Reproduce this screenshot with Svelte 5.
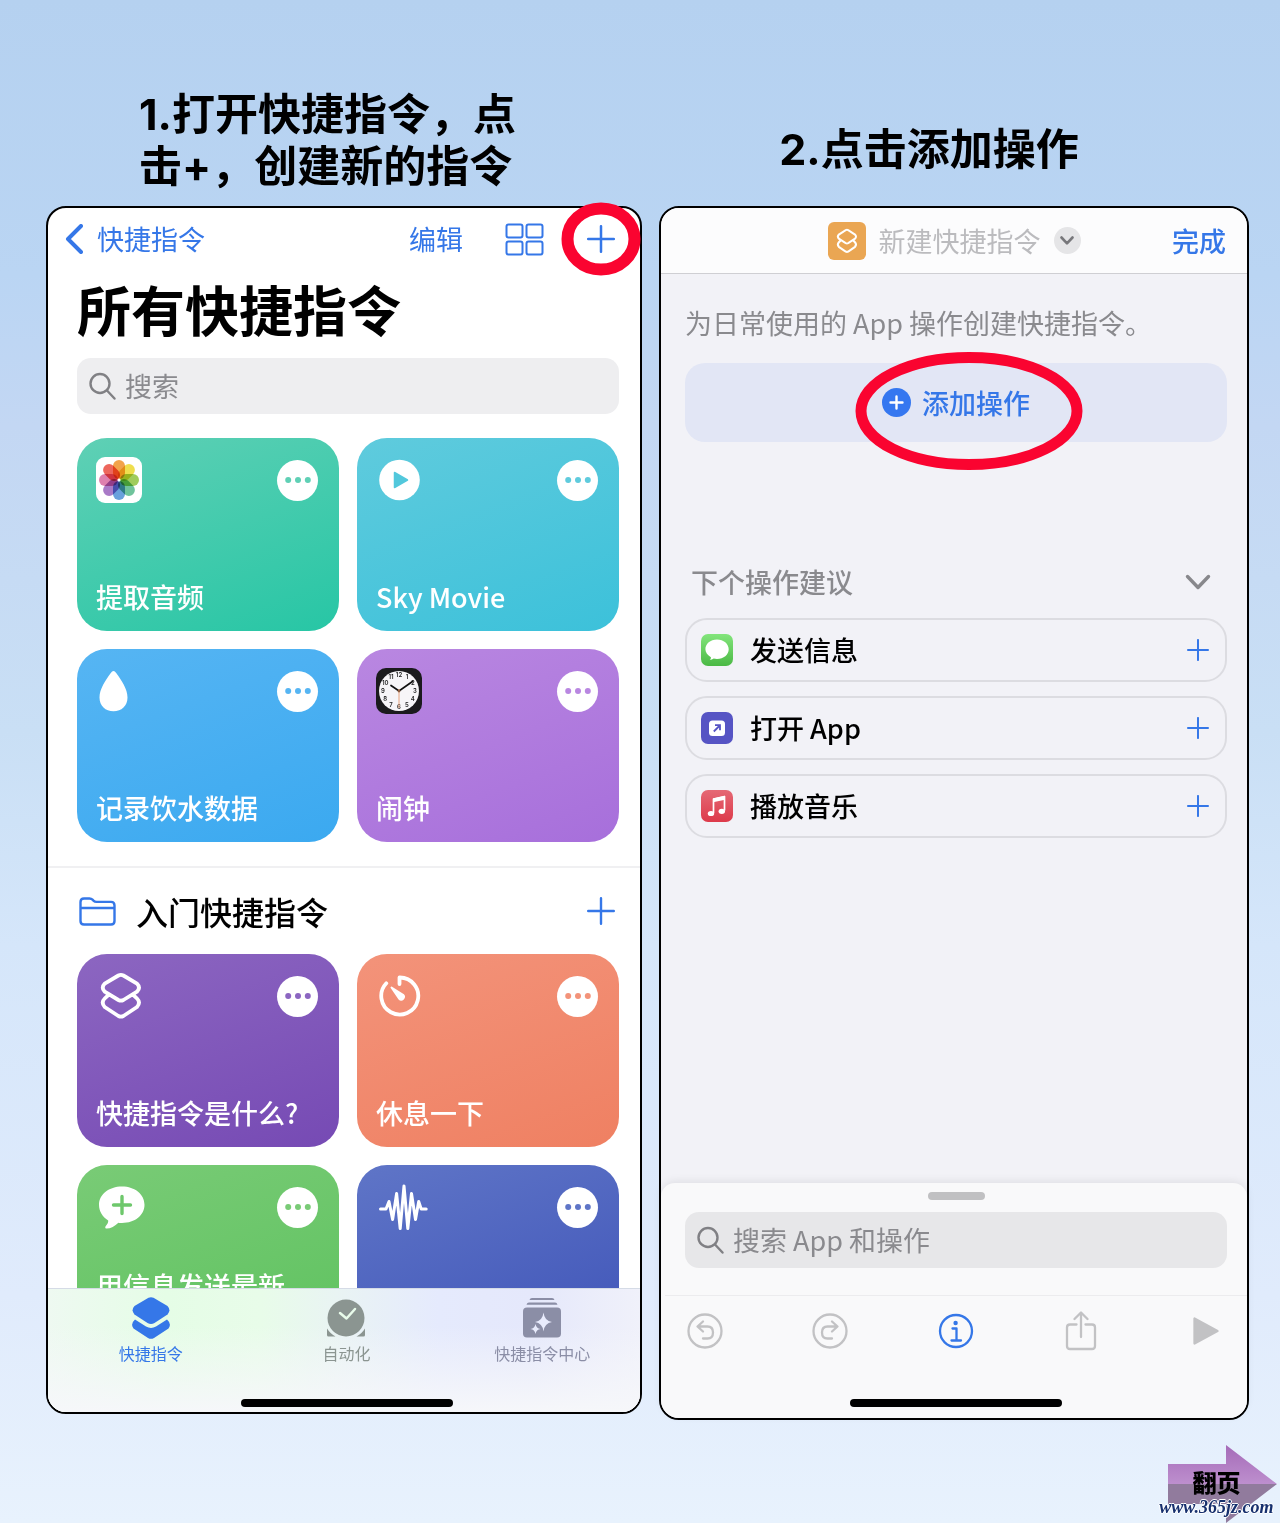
<script>
  const myShortcuts = [
    { title: '提取音频', icon: 'photos', from: '#5fd0b5', to: '#27c6a5' },
    { title: 'Sky Movie', icon: 'play', from: '#5fcbdd', to: '#3cc1da' },
    { title: '记录饮水数据', icon: 'drop', from: '#56b5f3', to: '#3ba9f0' },
    { title: '闹钟', icon: 'clock', from: '#b987e1', to: '#a76fdb' },
  ]

  const starterShortcuts = [
    { title: '快捷指令是什么?', icon: 'layers', from: '#8c66c1', to: '#764ab4' },
    { title: '休息一下', icon: 'timer', from: '#f3937a', to: '#ef8062' },
    { title: '用信息发送最新', icon: 'bubble', from: '#79cb76', to: '#5ec25f' },
    { title: '', icon: 'wave', from: '#5f75c7', to: '#3f54b8' },
  ]

  const suggestions = [
    { title: '发送信息', icon: 'messages' },
    { title: '打开 App', icon: 'openapp' },
    { title: '播放音乐', icon: 'music' },
  ]

  const petals = ['#f0932b', '#ecd92f', '#8fc33f', '#56b98a', '#4f8fd6', '#9a63bd', '#d86aa0', '#ea4b3f']
  const hours = [1, 2, 3, 4, 5, 6, 7, 8, 9, 10, 11, 12]

  // The two stacked diamonds of the app's logo, in a 46px box
  const layersPath =
    'M22.4 2.500q2.500-1.300 5 0L41 10.700q4 4 0 8L27.400 27q-2.500 1.300-5 0L8.700 18.700q-4-4 0-8z' +
    'M11.500 22.800l-2.800 2.700q-4 4 0 8.500L22.400 43q2.500 1.300 5 0L41 34q4-4.500 0-8.500l-2.800-2.700'

  let query = $state('')
  let actionQuery = $state('')

  function hourX(h) {
    return 23 + Math.sin((h * Math.PI) / 6) * 16
  }

  function hourY(h) {
    return 25 - Math.cos((h * Math.PI) / 6) * 16
  }
</script>

{#snippet plus(size)}
  <svg class="plus" width={size} height={size} viewBox="0 0 28 28" aria-hidden="true">
    <path d="M14 1.2v25.6M1.2 14h25.6" />
  </svg>
{/snippet}

{#snippet magnifier()}
  <svg class="search__icon" width="28" height="28" viewBox="0 0 28 28" aria-hidden="true">
    <circle cx="11" cy="11.500" r="9.500" />
    <path d="M18 18.500l7.500 8" />
  </svg>
{/snippet}

{#snippet cardIcon(name)}
  {#if name === 'photos'}
    <svg width="46" height="46" viewBox="0 0 46 46" aria-hidden="true">
      <rect width="46" height="46" rx="9" fill="#fff" />
      {#each petals as color, i}
        <rect class="petal" x="17" y="3" width="12" height="19" rx="6" fill={color} transform="rotate({i * 45} 23 23)" />
      {/each}
      <circle cx="23" cy="23" r="1.500" fill="#fff" />
    </svg>
  {:else if name === 'play'}
    <svg width="46" height="46" viewBox="0 0 46 46" aria-hidden="true">
      <circle cx="23.500" cy="23" r="20.300" fill="#fff" />
      <path d="M18.500 15.500v15l13-7.500z" fill="#52c8dc" stroke="#52c8dc" stroke-width="1.500" stroke-linejoin="round" />
    </svg>
  {:else if name === 'drop'}
    <svg width="46" height="46" viewBox="0 0 46 46" aria-hidden="true">
      <path d="M17.500 3c-1 0-1.800.7-2.700 2.100C9.500 12.500 3.500 21 3.500 29.500c0 8.500 6 13.800 14 13.800s14-5.300 14-13.800c0-8.500-6-17-11.300-24.400C19.300 3.700 18.500 3 17.500 3z" fill="#fff" />
    </svg>
  {:else if name === 'clock'}
    <svg width="46" height="46" viewBox="0 0 46 46" aria-hidden="true">
      <rect width="46" height="46" rx="10" fill="#1b1a1d" />
      <circle cx="23" cy="23" r="20" fill="#f7f5f8" />
      {#each hours as h}
        <text class="hour" x={hourX(h)} y={hourY(h)}>{h}</text>
      {/each}
      <path d="M15 17.500l8 5.500 13.500-9.500" fill="none" stroke="#111" stroke-width="1.700" stroke-linecap="round" />
      <path d="M23 21v19" stroke="#e8a27c" />
      <circle cx="23" cy="23" r="1.400" fill="#8b5a3c" />
    </svg>
  {:else if name === 'layers'}
    <svg class="line" width="46" height="46" viewBox="0 0 46 46" aria-hidden="true">
      <path d={layersPath} />
    </svg>
  {:else if name === 'timer'}
    <svg class="line" width="46" height="46" viewBox="0 0 46 46" aria-hidden="true">
      <path d="M23.500 11V4.500A18.500 18.500 0 1 1 10.300 10.300" />
      <path d="M15.500 14.500l11.500 7.300a2.700 2.700 0 0 1-3.800 4z" fill="#fff" stroke-width="2" />
    </svg>
  {:else if name === 'bubble'}
    <svg width="46" height="46" viewBox="0 0 46 46" aria-hidden="true">
      <path d="M26 2.500c13 0 22.500 8 22.500 18.300S39 39 26 39c-1.500 0-2.500 0-3.600-.3-3.400 3.300-7.900 5.800-11.600 5.900-1.600 0-2.100-1.600-1-2.700 1.700-1.900 2.600-3.400 2.400-5.400C6.600 33 3 27.500 3 20.800 3 10.500 13 2.500 26 2.500z" fill="#fff" />
      <path d="M26 12.500v17M17.500 21h17" stroke="#6ec86c" stroke-width="3.400" stroke-linecap="round" />
    </svg>
  {:else}
    <svg class="line" width="46" height="46" viewBox="0 0 46 46" aria-hidden="true">
      <path d="M4.500 25h5.500l3-7.500 3.600 18 4-26 3.600 35L28 2l3.800 42.500 3.700-35 4 26 3.200-18 2.500 7.500h5" stroke-width="3" />
    </svg>
  {/if}
{/snippet}

{#snippet card(item)}
  <article class="card card--{item.icon}" style:background="linear-gradient(160deg, {item.from}, {item.to})">
    <div class="card__top">
      <span class="card__icon">{@render cardIcon(item.icon)}</span>
      <button class="card__more" type="button" aria-label="更多" style:color={item.from}>
        <svg width="26" height="6" viewBox="0 0 26 6" fill="currentColor" aria-hidden="true">
          <circle cx="3.200" cy="3" r="3" />
          <circle cx="13" cy="3" r="3" />
          <circle cx="22.800" cy="3" r="3" />
        </svg>
      </button>
    </div>
    <h4 class="card__title">{item.title}</h4>
  </article>
{/snippet}

{#snippet suggestionIcon(name)}
  {#if name === 'messages'}
    <svg width="32" height="32" viewBox="0 0 32 32" aria-hidden="true">
      <defs>
        <linearGradient id="messages-fill" x2="0" y2="1">
          <stop stop-color="#83e57c" />
          <stop offset="1" stop-color="#4bb945" />
        </linearGradient>
      </defs>
      <rect width="32" height="32" rx="7" fill="url(#messages-fill)" />
      <path d="M16 5.500c6.600 0 11.700 4.300 11.700 9.800S22.600 25 16 25c-1.200 0-2.300-.1-3.300-.4-1.200.9-2.600 1.400-4 1.400 1-.8 1.300-1.800 1.200-2.800-3.300-1.800-5.500-4.700-5.500-7.900C4.400 9.800 9.400 5.500 16 5.500z" fill="#fff" />
    </svg>
  {:else if name === 'openapp'}
    <svg width="32" height="32" viewBox="0 0 32 32" aria-hidden="true">
      <rect width="32" height="32" rx="7" fill="#5654c4" />
      <rect x="8" y="8.500" width="16" height="15.500" rx="3.500" fill="#fff" />
      <path d="M12.800 19.500l6-6M14 13.200h5v5" fill="none" stroke="#5654c4" stroke-width="1.800" />
    </svg>
  {:else}
    <svg width="32" height="32" viewBox="0 0 32 32" aria-hidden="true">
      <defs>
        <linearGradient id="music-fill" x2="0" y2="1">
          <stop stop-color="#e56975" />
          <stop offset="1" stop-color="#dd3a4a" />
        </linearGradient>
      </defs>
      <rect width="32" height="32" rx="7" fill="url(#music-fill)" />
      <path d="M12.500 23V9l11-2.500v14" fill="none" stroke="#fff" stroke-width="1.700" stroke-linejoin="round" />
      <path d="M12 8.500l12-2.700v4L12 12.300z" fill="#fff" />
      <ellipse cx="10" cy="23.500" rx="3.200" ry="2.600" fill="#fff" />
      <ellipse cx="20.800" cy="21.300" rx="3.200" ry="2.600" fill="#fff" />
    </svg>
  {/if}
{/snippet}

<main class="guide" lang="zh-CN">
  <div class="steps">
    <section class="step">
      <h2 class="step__title">1.打开快捷指令，点<br />击+，创建新的指令</h2>

      <div class="phone">
        <nav class="nav">
          <a class="nav__back" href="#folders">
            <svg width="18" height="30" viewBox="0 0 18 30" aria-hidden="true">
              <path d="M16 2L3 15l13 13" />
            </svg>
            快捷指令
          </a>
          <button class="nav__edit" type="button">编辑</button>
          <button class="nav__grid" type="button" aria-label="网格视图">
            <svg width="40" height="33" viewBox="0 0 40 33" aria-hidden="true">
              <rect x="1.500" y="1.500" width="16" height="13" rx="2" />
              <rect x="21.500" y="1.500" width="16" height="13" rx="2" />
              <rect x="1.500" y="18.500" width="16" height="13" rx="2" />
              <rect x="21.500" y="18.500" width="16" height="13" rx="2" />
            </svg>
          </button>
          <button class="nav__add" type="button" aria-label="新建快捷指令">
            {@render plus(28)}
            <svg class="ring" width="80" height="74" viewBox="0 0 80 74" aria-hidden="true">
              <ellipse cx="40" cy="37" rx="33.500" ry="30.500" stroke-width="12" />
            </svg>
          </button>
        </nav>

        <div class="library">
          <h1 class="library__title">所有快捷指令</h1>
          <label class="search">
            {@render magnifier()}
            <input class="search__input" type="search" placeholder="搜索" aria-label="搜索" bind:value={query} />
          </label>
          <div class="cards">
            {#each myShortcuts as item}
              {@render card(item)}
            {/each}
          </div>
        </div>

        <div class="library library--starter">
          <header class="folder">
            <svg width="37" height="29" viewBox="0 0 37 29" aria-hidden="true">
              <path d="M1.500 24V5q0-3.500 3.500-3.500h5.500q1.800 0 3 1.200l1.200 1.200q1 1 2.800 1H32q3.500 0 3.500 3.500V24q0 3.500-3.500 3.500H5Q1.500 27.500 1.500 24zM1.500 11h34" />
            </svg>
            <h3 class="folder__title">入门快捷指令</h3>
            <button class="folder__add" type="button" aria-label="添加到文件夹">{@render plus(28)}</button>
          </header>
          <div class="cards">
            {#each starterShortcuts as item}
              {@render card(item)}
            {/each}
          </div>
        </div>

        <footer class="tabbar">
          <nav class="tabs">
            <a class="tab tab--active" href="#shortcuts">
              <svg width="38" height="42" viewBox="0 0 38 42" aria-hidden="true">
                <path d="M16.500.8q2.500-1.300 5 0L35.500 9q3.800 4 0 8.500l-13 8.500q-3.500 2-7 0l-13-8.500q-3.800-4.500 0-8.500z" />
                <path d="M3 22.500l11 7q5 2.800 10 0l11-7q5 4.500 1.500 9L22 41q-3 1.700-6 0L1.500 31.500Q-2 27 3 22.500z" />
              </svg>
              快捷指令
            </a>
            <a class="tab tab--automation" href="#automation">
              <svg width="38" height="42" viewBox="0 0 38 42" aria-hidden="true">
                <circle cx="19" cy="21" r="18.500" />
                <path d="M0 31.500Q3.500 37 8.500 39.500H1.500Q0 39.500 0 38zM38 31.500Q34.500 37 29.500 39.500h7q1.500 0 1.500-1.500z" />
                <path class="tab__cut" d="M13 16l6.500 5.500 8.500-9.500" />
              </svg>
              自动化
            </a>
            <a class="tab tab--gallery" href="#gallery">
              <svg width="38" height="42" viewBox="0 0 38 42" aria-hidden="true">
                <path d="M9 1h20q2 0 2.500 2h-25Q7 1 9 1zM6 5.500h26q2 0 2.500 2.300h-31Q4 5.500 6 5.500z" />
                <rect y="10.500" width="38" height="30" rx="4" />
                <path class="tab__spark" d="M20.500 15.500q1 8.500 8.500 9.500-7.500 1-8.500 9.500-1-8.500-8.500-9.500 7.500-1 8.500-9.500zM12.500 27q.8 4.300 5 5-4.200.7-5 5-.8-4.300-5-5 4.200-.7 5-5z" />
              </svg>
              快捷指令中心
            </a>
          </nav>
          <div class="home"></div>
        </footer>
      </div>
    </section>

    <section class="step">
      <h2 class="step__title step__title--center">2.点击添加操作</h2>

      <div class="phone phone--editor">
        <header class="editor-nav">
          <div class="editor-nav__name">
            <svg width="38" height="38" viewBox="0 0 38 38" aria-hidden="true">
              <rect width="38" height="38" rx="6" fill="#eaa653" />
              <path d={layersPath} transform="translate(6.500 6.800) scale(.5 .53)" fill="none" stroke="#fff" stroke-width="4" stroke-linecap="round" />
            </svg>
            <span>新建快捷指令</span>
            <button class="editor-nav__menu" type="button" aria-label="选项">
              <svg width="14" height="9" viewBox="0 0 14 9" aria-hidden="true"><path d="M1.500 1.500L7 7.300l5.500-5.800" /></svg>
            </button>
          </div>
          <button class="editor-nav__done" type="button">完成</button>
        </header>

        <div class="editor">
          <p class="editor__hint">为日常使用的 App 操作创建快捷指令。</p>
          <button class="add-action" type="button">
            <svg width="29" height="29" viewBox="0 0 29 29" aria-hidden="true">
              <circle cx="14.500" cy="14.500" r="14.500" fill="#3577f0" />
              <path d="M14.500 8.500v12M8.500 14.500h12" stroke="#fff" stroke-width="2.400" stroke-linecap="round" />
            </svg>
            添加操作
            <svg class="ring ring--wide" width="228" height="120" viewBox="0 0 228 120" aria-hidden="true">
              <ellipse cx="114" cy="60" rx="108" ry="53.500" stroke-width="11" />
            </svg>
          </button>

          <div class="suggest-head">
            <h3 class="suggest-head__title">下个操作建议</h3>
            <button class="suggest-head__toggle" type="button" aria-label="收起">
              <svg width="26" height="16" viewBox="0 0 26 16" aria-hidden="true"><path d="M2.500 2.500L13 13.500l10.500-11" /></svg>
            </button>
          </div>
          <ul class="suggestions">
            {#each suggestions as item}
              <li>
                <button class="suggestion" type="button">
                  {@render suggestionIcon(item.icon)}
                  <span class="suggestion__name">{item.title}</span>
                  {@render plus(22)}
                </button>
              </li>
            {/each}
          </ul>
        </div>

        <footer class="sheet">
          <div class="sheet__search">
            <div class="sheet__handle"></div>
            <label class="search search--sheet">
              {@render magnifier()}
              <input class="search__input" type="search" placeholder="搜索 App 和操作" aria-label="搜索 App 和操作" bind:value={actionQuery} />
            </label>
          </div>
          <div class="toolbar">
            <button type="button" aria-label="撤销">
              <svg width="36" height="40" viewBox="0 0 36 40" aria-hidden="true">
                <circle cx="18" cy="20" r="16.500" />
                <path d="M16 10.500l-5.500 5 5.500 5M11 15.500h9.500q5.500 0 5.500 6t-5.500 6h-4.500" />
              </svg>
            </button>
            <button type="button" aria-label="重做">
              <svg width="36" height="40" viewBox="0 0 36 40" aria-hidden="true">
                <circle cx="18" cy="20" r="16.500" />
                <path d="M20 10.500l5.500 5-5.500 5M25 15.500h-9.500q-5.500 0-5.500 6t5.500 6H20" />
              </svg>
            </button>
            <button class="toolbar__info" type="button" aria-label="信息">
              <svg width="36" height="40" viewBox="0 0 36 40" aria-hidden="true">
                <circle cx="18" cy="20" r="16" />
                <circle class="toolbar__dot" cx="17.600" cy="12" r="2.200" />
                <path d="M14.500 17.500h4V29M13.500 29.500h9.500" />
              </svg>
            </button>
            <button type="button" aria-label="共享">
              <svg width="36" height="40" viewBox="0 0 36 40" aria-hidden="true">
                <path d="M13.500 13.500H7q-3 0-3 3V35q0 3 3 3h22q3 0 3-3V16.500q0-3-3-3h-6.500M18 26V2M11.500 8L18 1.500 24.500 8" />
              </svg>
            </button>
            <button type="button" aria-label="运行">
              <svg width="36" height="40" viewBox="0 0 36 40" aria-hidden="true">
                <path class="toolbar__play" d="M6.500 7.500v25l23-12.500z" />
              </svg>
            </button>
          </div>
          <div class="home"></div>
        </footer>
      </div>
    </section>
  </div>

  <a class="next" href="#next">
    <svg width="110" height="78" viewBox="0 0 110 78" aria-hidden="true">
      <defs>
        <linearGradient id="arrow-top" x2="0" y2="1">
          <stop stop-color="#a56bb8" />
          <stop offset="1" stop-color="#bd8fce" />
        </linearGradient>
      </defs>
      <path d="M0 19h58V0l51 39H0z" fill="url(#arrow-top)" />
      <path d="M0 39h109L58 78V59H0z" fill="#917b9d" />
    </svg>
    <span class="next__label">翻页</span>
    <span class="next__site">www.365jz.com</span>
  </a>
</main>

<style>
  :global(body) {
    background: #e8f2fd;
  }

  .guide {
    --blue: #3577e8;
    --gray: #8a8a8e;
    box-sizing: border-box;
    min-height: 100vh;
    padding: 88px 31px 0 46px;
    background: linear-gradient(180deg, #b5d1f0 0%, #bad5f3 18%, #c3d7f3 28%, #c9dff5 48%, #d5e6fa 62%, #e0ebfc 85%, #e8f2fd 100%);
    color: #000;
    font-family: "Noto Sans CJK SC", sans-serif;
    font-size: 27px;
    line-height: 40px;
  }

  .guide :global(svg) {
    display: block;
    flex: none;
  }

  h1,
  h2,
  h3,
  h4,
  p,
  ul {
    margin: 0;
    padding: 0;
  }

  button,
  input {
    margin: 0;
    padding: 0;
    border: 0;
    background: none;
    color: inherit;
    font: inherit;
  }

  button {
    cursor: pointer;
  }

  a {
    color: inherit;
    text-decoration: none;
  }

  .steps {
    display: grid;
    grid-template-columns: 596fr 590fr;
    gap: 17px;
    align-items: start;
  }

  .step__title {
    display: flex;
    align-items: center;
    box-sizing: border-box;
    min-height: 118px;
    padding: 0 0 14px 93px;
    font-family: Inter, "Noto Sans CJK SC", sans-serif;
    font-size: 43px;
    font-weight: 700;
    line-height: 52px;
  }

  .step__title--center {
    justify-content: center;
    padding: 4px 50px 0 0;
  }

  .phone {
    border: 2px solid #000;
    border-radius: 20px;
    background: #fff;
  }

  .phone--editor {
    display: flex;
    flex-direction: column;
    background: #f2f2f7;
  }

  .plus {
    fill: none;
    stroke: var(--blue);
    stroke-width: 2.5;
    stroke-linecap: round;
  }

  .ring {
    position: absolute;
    top: 50%;
    left: 50%;
    transform: translate(-50%, -50%);
    fill: none;
    stroke: #fa0430;
    pointer-events: none;
  }

  /* First phone: library */
  .nav {
    display: flex;
    align-items: center;
    padding: 11px 25px 11px 17px;
    color: var(--blue);
  }

  .nav__back {
    display: flex;
    align-items: center;
    gap: 14px;
    margin-right: auto;
  }

  .nav__back svg {
    fill: none;
    stroke: var(--blue);
    stroke-width: 4;
    stroke-linecap: round;
    stroke-linejoin: round;
  }

  .nav__grid {
    margin: 0 42px;
  }

  .nav__grid svg {
    fill: none;
    stroke: var(--blue);
    stroke-width: 2;
  }

  .nav__add {
    position: relative;
  }

  .library {
    padding: 0 21px 24px 29px;
  }

  .library--starter {
    padding-top: 19px;
    padding-bottom: 0;
    border-top: 2px solid #f0f0f2;
  }

  .library__title {
    font-size: 54px;
    font-weight: 700;
    line-height: 78px;
  }

  .search {
    display: flex;
    align-items: center;
    gap: 8px;
    height: 56px;
    margin: 10px 0 24px;
    padding: 0 12px;
    border-radius: 14px;
    background: #eeeef0;
  }

  .search__icon {
    fill: none;
    stroke: #808084;
    stroke-width: 2.4;
    stroke-linecap: round;
  }

  .search__input {
    flex: 1;
    min-width: 0;
    outline: none;
  }

  .search__input::placeholder {
    color: var(--gray);
    opacity: 1;
  }

  .cards {
    display: grid;
    grid-template-columns: 1fr 1fr;
    gap: 18px;
  }

  .card {
    display: flex;
    flex-direction: column;
    justify-content: space-between;
    box-sizing: border-box;
    min-height: 193px;
    padding: 19px 21px 15px 19px;
    border-radius: 30px;
    color: #fff;
  }

  .card__top {
    display: flex;
    align-items: center;
    justify-content: space-between;
  }

  .card__icon :global(svg) {
    overflow: visible;
  }

  .card__icon :global(.petal) {
    mix-blend-mode: multiply;
    opacity: 0.85;
  }

  .card__icon :global(.line) {
    fill: none;
    stroke: #fff;
    stroke-width: 3.8;
    stroke-linecap: round;
    stroke-linejoin: round;
  }

  .card__icon :global(.hour) {
    font-family: Inter, sans-serif;
    font-size: 6px;
    font-weight: 600;
    text-anchor: middle;
    fill: #222;
  }

  .card__more {
    display: grid;
    place-items: center;
    width: 41px;
    height: 41px;
    border-radius: 50%;
    background: #fff;
  }

  .card__title {
    min-height: 38px;
    font-size: 27px;
    font-weight: 500;
    line-height: 38px;
  }

  .card--bubble .card__title {
    min-height: 76px;
  }

  .folder {
    display: flex;
    align-items: center;
    gap: 20px;
    padding: 0 4px 19px 2px;
  }

  .folder svg {
    fill: none;
    stroke: var(--blue);
    stroke-width: 2.4;
  }

  .folder__title {
    flex: 1;
    font-size: 32px;
    font-weight: 500;
    line-height: 48px;
  }

  /* The bar lies over the last row of cards */
  .tabbar {
    position: relative;
    margin-top: -70px;
    padding: 8px 0 5px 5px;
    border-top: 1px solid #d5dbe6;
    border-radius: 0 0 18px 18px;
    background:
      linear-gradient(180deg, rgba(246, 247, 250, 0) 30%, #f6f7fa 100%),
      linear-gradient(90deg, #eef9f1 0%, #e5fde6 20%, #e8fce9 36%, #e9f3f4 50%, #e5eafd 66%, #e5e8fb 82%, #f0f1fa 100%);
  }

  .tabs {
    display: grid;
    grid-template-columns: 1fr 1fr 1fr;
    padding-bottom: 34px;
  }

  .tab {
    display: flex;
    flex-direction: column;
    align-items: center;
    gap: 2px;
    color: #8b9591;
    font-size: 16px;
    line-height: 24px;
  }

  .tab svg {
    fill: currentColor;
  }

  .tab--active {
    color: var(--blue);
  }

  .tab--gallery {
    color: #8b8ea6;
  }

  .tab__cut {
    fill: none;
    stroke: #e8fbea;
    stroke-width: 2.5;
    stroke-linecap: round;
    stroke-linejoin: round;
  }

  .tab__spark {
    fill: #e8ebfc;
  }

  .home {
    width: 212px;
    height: 8px;
    margin: 0 auto;
    border-radius: 4px;
    background: #000;
  }

  /* Second phone: editor */
  .editor-nav {
    position: relative;
    display: flex;
    align-items: center;
    justify-content: center;
    height: 65px;
    border-bottom: 1px solid #cfcfd3;
    border-radius: 18px 18px 0 0;
    background: #fcfcfd;
  }

  .editor-nav__name {
    display: flex;
    align-items: center;
    gap: 13px;
    color: #bbbbbe;
  }

  .editor-nav__menu {
    display: grid;
    place-items: center;
    width: 27px;
    height: 27px;
    border-radius: 50%;
    background: #e5e5e7;
  }

  .editor-nav__menu svg,
  .suggest-head__toggle svg {
    fill: none;
    stroke: #77777b;
    stroke-width: 2.6;
    stroke-linecap: round;
    stroke-linejoin: round;
  }

  .editor-nav__done {
    position: absolute;
    right: 21px;
    color: var(--blue);
    font-weight: 500;
  }

  .editor {
    flex: 1;
    padding: 29px 20px 345px 24px;
  }

  .editor__hint {
    color: var(--gray);
    white-space: nowrap;
  }

  .add-action {
    position: relative;
    display: flex;
    align-items: center;
    justify-content: center;
    gap: 11px;
    width: 100%;
    height: 79px;
    margin-top: 20px;
    border-radius: 20px;
    background: #e2e6f5;
    color: var(--blue);
    font-weight: 500;
  }

  .ring--wide {
    margin: 8px 0 0 13px;
  }

  .suggest-head {
    display: flex;
    align-items: center;
    justify-content: space-between;
    margin-top: 120px;
    padding: 0 16px 16px 6px;
    color: var(--gray);
  }

  .suggest-head__title {
    font-size: 27px;
    font-weight: 500;
  }

  .suggest-head__toggle svg {
    stroke: #88888c;
    stroke-width: 3.4;
  }

  .suggestions {
    display: grid;
    gap: 14px;
    list-style: none;
  }

  .suggestion {
    display: flex;
    align-items: center;
    gap: 17px;
    box-sizing: border-box;
    width: 100%;
    height: 64px;
    padding: 0 16px 0 14px;
    border: 2px solid #dcdce1;
    border-radius: 22px;
    font-weight: 500;
    text-align: left;
  }

  .suggestion__name {
    flex: 1;
  }

  .sheet {
    padding: 0 0 11px 4px;
    border-radius: 14px 14px 18px 18px;
    background: #f9f9fa;
    box-shadow: 0 -2px 8px rgba(0, 0, 0, 0.08);
  }

  .sheet__search {
    padding: 9px 20px 27px;
    border-bottom: 1px solid #ececee;
  }

  .sheet__handle {
    width: 57px;
    height: 8px;
    margin: 0 auto;
    border-radius: 4px;
    background: #c0c0c2;
  }

  .search--sheet {
    margin: 12px 0 0;
    background: #e7e7e9;
  }

  .toolbar {
    display: flex;
    justify-content: space-between;
    padding: 15px 23px 48px 22px;
  }

  .toolbar svg {
    fill: none;
    stroke: #c2c2c4;
    stroke-width: 2.3;
    stroke-linecap: round;
    stroke-linejoin: round;
  }

  .toolbar__info svg {
    stroke: var(--blue);
  }

  .toolbar__info .toolbar__dot {
    fill: var(--blue);
    stroke: none;
  }

  .toolbar .toolbar__play {
    fill: #c2c2c4;
  }

  .next {
    position: relative;
    display: block;
    width: 110px;
    margin: 25px -29px 0 auto;
  }

  .next__label,
  .next__site {
    position: absolute;
    left: 44%;
    transform: translateX(-50%);
    white-space: nowrap;
  }

  .next__label {
    top: 17px;
    font-size: 24px;
    font-weight: 900;
  }

  .next__site {
    top: 52px;
    color: #17306e;
    font-family: "Liberation Serif", serif;
    font-size: 18px;
    font-style: italic;
    font-weight: 700;
    line-height: 20px;
    text-shadow: 1px 0 #fff, -1px 0 #fff, 0 1px #fff, 0 -1px #fff;
  }
</style>
